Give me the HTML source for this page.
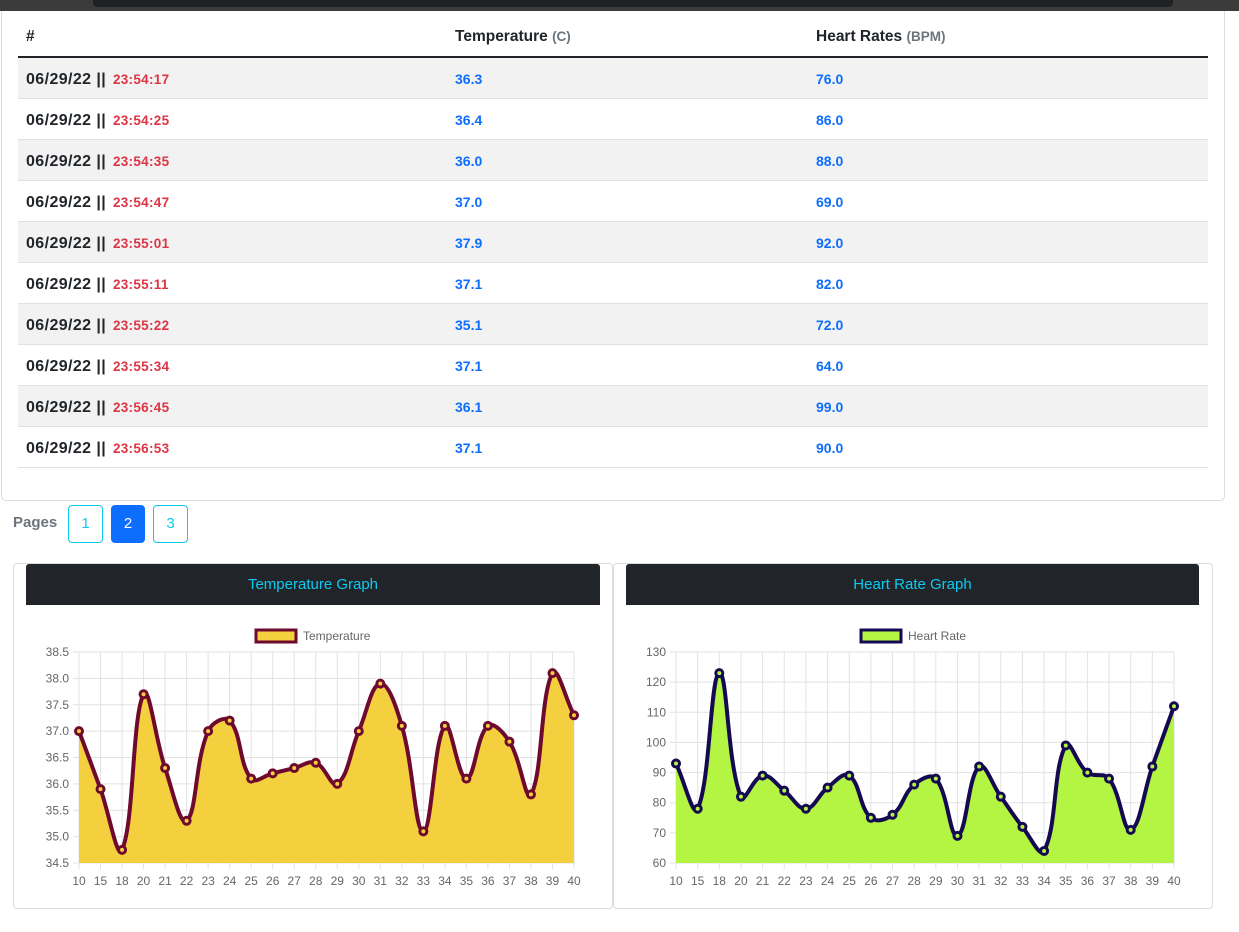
<!DOCTYPE html>
<html><head><meta charset="utf-8">
<style>
*{box-sizing:border-box;margin:0;padding:0}
body{width:1239px;height:932px;background:#fff;font-family:"Liberation Sans",sans-serif;position:relative;overflow:hidden}
.topstrip{position:absolute;left:0;top:0;width:1239px;height:11px;background:#3b3b3b}
.topbar{position:absolute;left:93px;top:0;width:1080px;height:7px;background:#202124;border-radius:0 0 4px 4px}
.card{position:absolute;left:1px;top:11px;width:1224px;height:490px;border:1px solid #dcdcdc;border-top:none;border-radius:0 0 5px 5px}
.row{position:absolute;left:18px;width:1190px;height:41px;border-bottom:1px solid #dee2e6;font-weight:bold}
.row span{position:absolute;top:13px}
.c1{left:8px;color:#212529;font-size:16px;letter-spacing:0.4px}
.c1 b{color:#dc3545;font-size:13.5px;letter-spacing:0.3px;margin-left:2px}
.c2{left:437px;color:#0d6efd;font-size:14px}
.c3{left:798px;color:#0d6efd;font-size:14px}
.hdr{position:absolute;left:18px;top:18px;width:1190px;height:40px;border-bottom:2px solid #212529;font-weight:bold;font-size:15.5px;color:#212529}
.hdr span{position:absolute;top:10px}
.hdr i{font-style:normal;color:#6c757d;font-size:13.5px}
.pages{position:absolute;left:13px;top:514px;font-size:15px;font-weight:bold;color:#6c757d}
.pb{position:absolute;top:505px;width:35px;height:38px;border:1px solid #0dcaf0;border-radius:4px;color:#0dcaf0;font-size:15px;text-align:center;line-height:36px}
.ccard{position:absolute;top:563px;width:600px;height:346px;border:1px solid #dcdcdc;border-radius:4px}
.chead{position:absolute;top:564px;height:41px;background:#212529;color:#0dcaf0;font-size:15px;text-align:center;line-height:42px;border-radius:3px 3px 0 0}
svg{position:absolute;left:0;top:0}
</style></head><body>
<div class="topstrip"></div><div class="topbar"></div>
<div class="card"></div>
<div class="hdr"><span style="left:8px">#</span><span style="left:437px">Temperature <i>(C)</i></span><span style="left:798px">Heart Rates <i>(BPM)</i></span></div>
<div id="rows"></div>
<div class="pages">Pages</div>
<div class="pb" style="left:68px">1</div>
<div class="pb" style="left:111px;width:34px;background:#0d6efd;border-color:#0d6efd;color:#fff">2</div>
<div class="pb" style="left:153px">3</div>
<div class="ccard" style="left:13px"></div>
<div class="ccard" style="left:613px"></div>
<div class="chead" style="left:26px;width:574px">Temperature Graph</div>
<div class="chead" style="left:626px;width:573px">Heart Rate Graph</div>
<svg id="s" width="1239" height="932" xmlns="http://www.w3.org/2000/svg" font-family="Liberation Sans, sans-serif"></svg>
<script>
var data=[["23:54:17","36.3","76.0"],["23:54:25","36.4","86.0"],["23:54:35","36.0","88.0"],["23:54:47","37.0","69.0"],["23:55:01","37.9","92.0"],["23:55:11","37.1","82.0"],["23:55:22","35.1","72.0"],["23:55:34","37.1","64.0"],["23:56:45","36.1","99.0"],["23:56:53","37.1","90.0"]];
var h="";data.forEach(function(d,i){h+='<div class="row" style="top:'+(58+i*41)+'px;background:'+(i%2?'#fff':'#f2f2f2')+'"><span class="c1">06/29/22 || <b>'+d[0]+'</b></span><span class="c2">'+d[1]+'</span><span class="c3">'+d[2]+'</span></div>';});
document.getElementById('rows').innerHTML=h;
var labels=[10,15,18,20,21,22,23,24,25,26,27,28,29,30,31,32,33,34,35,36,37,38,39,40];
function chart(x0,x1,y0,y1,min,max,step,dec,vals,fill,stroke,name,lx){
 var s="",n=vals.length,dx=(x1-x0)/(n-1);
 var Y=function(v){return y1-(v-min)/(max-min)*(y1-y0)};
 for(var i=0;i<n;i++){var x=x0+i*dx;s+='<line x1="'+x+'" y1="'+y0+'" x2="'+x+'" y2="'+(y1+6)+'" stroke="#e2e2e2"/>';
  s+='<text x="'+x+'" y="'+(y1+22)+'" font-size="12" fill="#666" text-anchor="middle">'+labels[i]+'</text>';}
 for(var v=min;v<=max+1e-6;v+=step){var y=Y(v);s+='<line x1="'+(x0-6)+'" y1="'+y+'" x2="'+x1+'" y2="'+y+'" stroke="#e2e2e2"/>';
  s+='<text x="'+(x0-10)+'" y="'+(y+4)+'" font-size="12" fill="#666" text-anchor="end">'+v.toFixed(dec)+'</text>';}
 var P=vals.map(function(v,i){return [x0+i*dx,Y(v)]});
 var t=0.4,cp=[];
 for(var i=0;i<n;i++){var p=P[Math.max(i-1,0)],c=P[i],q=P[Math.min(i+1,n-1)];
  var d01=Math.hypot(c[0]-p[0],c[1]-p[1]),d12=Math.hypot(q[0]-c[0],q[1]-c[1]);
  var s01=d01/(d01+d12||1),s12=d12/(d01+d12||1);var fa=t*s01,fb=t*s12;
  cp.push([[c[0]-fa*(q[0]-p[0]),c[1]-fa*(q[1]-p[1])],[c[0]+fb*(q[0]-p[0]),c[1]+fb*(q[1]-p[1])]]);}
 var d="M"+P[0][0]+" "+P[0][1];
 for(var i=1;i<n;i++){d+=" C"+cp[i-1][1][0]+" "+cp[i-1][1][1]+" "+cp[i][0][0]+" "+cp[i][0][1]+" "+P[i][0]+" "+P[i][1];}
 s+='<path d="'+d+' L'+x1+' '+y1+' L'+x0+' '+y1+' Z" fill="'+fill+'"/>';
 s+='<path d="'+d+'" fill="none" stroke="'+stroke+'" stroke-width="4"/>';
 P.forEach(function(p){s+='<circle cx="'+p[0]+'" cy="'+p[1]+'" r="3.5" fill="'+fill+'" stroke="'+stroke+'" stroke-width="3"/>';});
 s+='<rect x="'+lx+'" y="630" width="40" height="12" fill="'+fill+'" stroke="'+stroke+'" stroke-width="3"/>';
 s+='<text x="'+(lx+47)+'" y="640" font-size="12" fill="#666">'+name+'</text>';
 return s;}
document.getElementById('s').innerHTML=
 chart(79,574,652,863,34.5,38.5,0.5,1,[37.0,35.9,34.75,37.7,36.3,35.3,37.0,37.2,36.1,36.2,36.3,36.4,36.0,37.0,37.9,37.1,35.1,37.1,36.1,37.1,36.8,35.8,38.1,37.3],"#f4d03f","#6e0a2e","Temperature",256)+
 chart(676,1174,652,863,60,130,10,0,[93,78,123,82,89,84,78,85,89,75,76,86,88,69,92,82,72,64,99,90,88,71,92,112],"#b3f542","#150a52","Heart Rate",861);
</script>
</body></html>
